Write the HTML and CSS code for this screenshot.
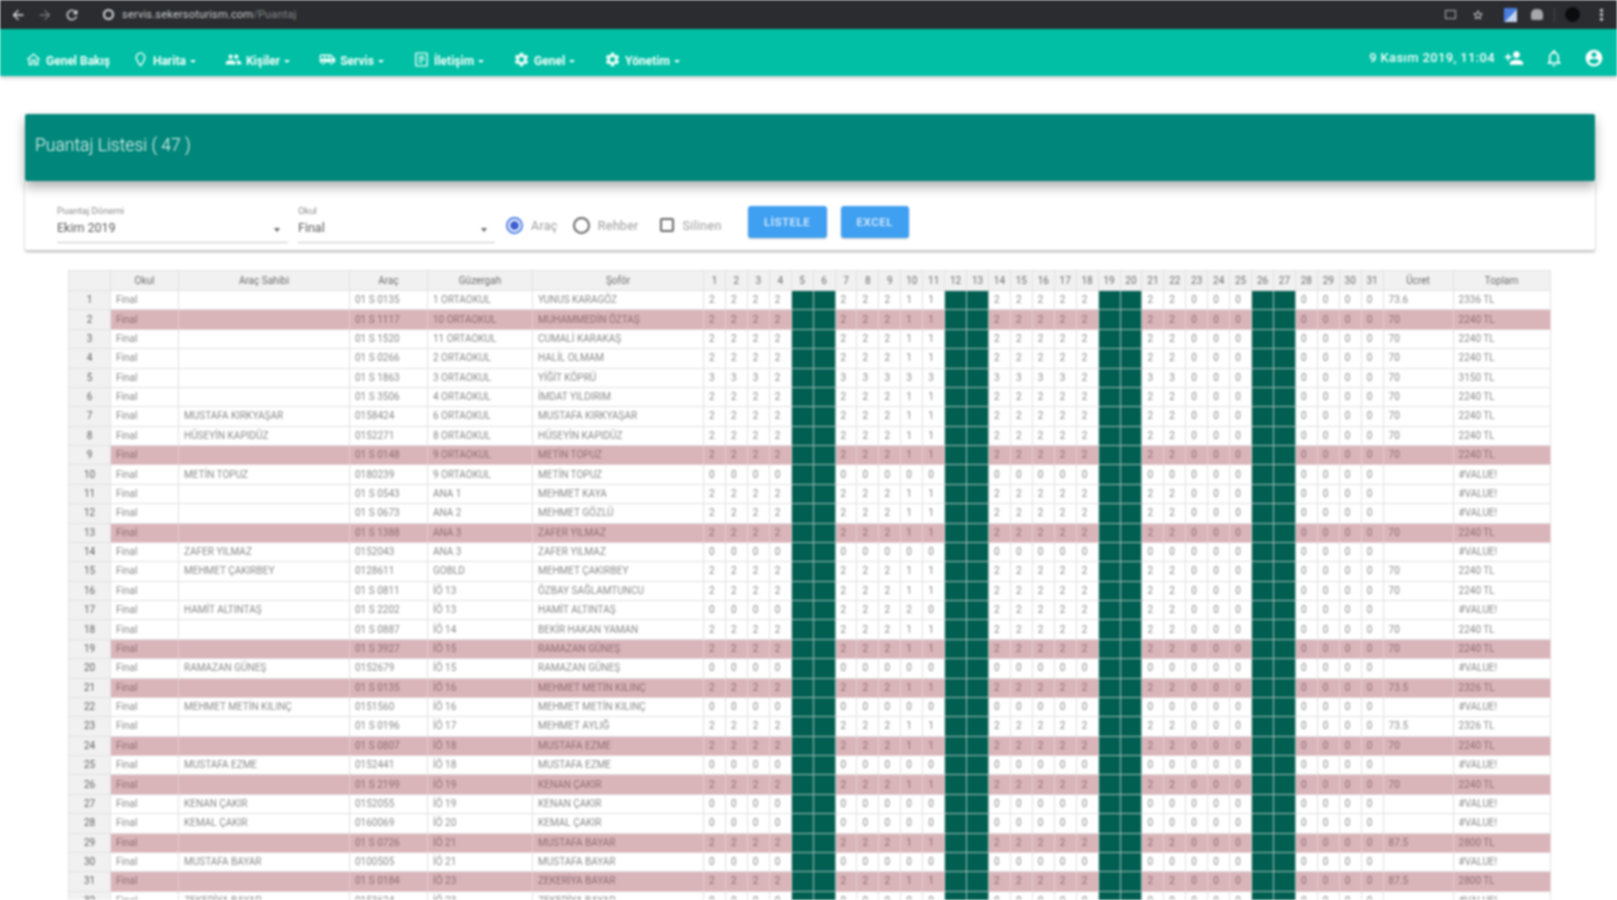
FILE: index.html
```html
<!DOCTYPE html>
<html lang="tr">
<head>
<meta charset="utf-8">
<title>Puantaj</title>
<link rel="stylesheet" href="styles.css">
</head>
<body>
<svg class="defs" width="0" height="0" aria-hidden="true">
  <symbol id="i-back" viewBox="0 0 24 24"><path d="M20 11H7.83l5.59-5.59L12 4l-8 8 8 8 1.41-1.41L7.83 13H20v-2z"/></symbol>
  <symbol id="i-forward" viewBox="0 0 24 24"><path d="M12 4l-1.41 1.41L16.17 11H4v2h12.17l-5.58 5.59L12 20l8-8z"/></symbol>
  <symbol id="i-reload" viewBox="0 0 24 24"><path d="M17.65 6.35C16.2 4.9 14.21 4 12 4c-4.42 0-7.99 3.58-7.99 8s3.57 8 7.99 8c3.73 0 6.84-2.55 7.73-6h-2.08c-.82 2.33-3.04 4-5.65 4-3.31 0-6-2.69-6-6s2.69-6 6-6c1.66 0 3.14.69 4.22 1.78L13 11h7V4l-2.35 2.35z"/></symbol>
  <symbol id="i-star" viewBox="0 0 24 24"><path d="M22 9.24l-7.19-.62L12 2 9.19 8.63 2 9.24l5.46 4.73L5.82 21 12 17.27 18.18 21l-1.63-7.03L22 9.24zM12 15.4l-3.76 2.27 1-4.28-3.32-2.88 4.38-.38L12 6.1l1.71 4.04 4.38.38-3.32 2.88 1 4.28L12 15.4z"/></symbol>
  <symbol id="i-home" viewBox="0 0 24 24"><path d="M12 5.69l5 4.5V18h-2v-6H9v6H7v-7.81l5-4.5M12 3L2 12h3v8h6v-6h2v6h6v-8h3L12 3z"/></symbol>
  <symbol id="i-pin" viewBox="0 0 24 24"><path d="M12 2C8.13 2 5 5.13 5 9c0 5.25 7 13 7 13s7-7.75 7-13c0-3.87-3.13-7-7-7zM7 9c0-2.76 2.24-5 5-5s5 2.24 5 5c0 2.88-2.88 7.19-5 9.88C9.92 16.21 7 11.85 7 9z"/></symbol>
  <symbol id="i-people" viewBox="0 0 24 24"><path d="M16 11c1.66 0 2.99-1.34 2.99-3S17.66 5 16 5c-1.66 0-3 1.34-3 3s1.34 3 3 3zm-8 0c1.66 0 2.99-1.34 2.99-3S9.66 5 8 5C6.34 5 5 6.34 5 8s1.34 3 3 3zm0 2c-2.33 0-7 1.17-7 3.5V19h14v-2.5c0-2.33-4.67-3.5-7-3.5zm8 0c-.29 0-.62.02-.97.05 1.16.84 1.97 1.97 1.97 3.45V19h6v-2.5c0-2.33-4.67-3.5-7-3.5z"/></symbol>
  <symbol id="i-bus" viewBox="0 0 24 24"><path d="M17 5H3c-1.1 0-2 .89-2 2v9h2c0 1.65 1.34 3 3 3s3-1.35 3-3h5.5c0 1.65 1.34 3 3 3s3-1.35 3-3H23v-5l-6-6zM3 11V7h4v4H3zm3 6.5c-.83 0-1.5-.67-1.5-1.5s.67-1.5 1.5-1.5 1.5.67 1.5 1.5-.67 1.5-1.5 1.5zM13 11H9V7h4v4zm4.5 6.5c-.83 0-1.5-.67-1.5-1.5s.67-1.5 1.5-1.5 1.5.67 1.5 1.5-.67 1.5-1.5 1.5zM15 11V7h1l4 4h-5z"/></symbol>
  <symbol id="i-contact" viewBox="0 0 24 24"><path d="M19 2H5c-1.1 0-2 .9-2 2v16c0 1.1.9 2 2 2h14c1.1 0 2-.9 2-2V4c0-1.1-.9-2-2-2zm0 18H5V4h14v16zM8 7h8v2H8V7zm0 4h8v2H8v-2zm0 4h5v2H8v-2z"/></symbol>
  <symbol id="i-gear" viewBox="0 0 24 24"><path d="M19.14 12.94c.04-.3.06-.61.06-.94 0-.32-.02-.64-.07-.94l2.03-1.58c.18-.14.23-.41.12-.61l-1.92-3.32c-.12-.22-.37-.29-.59-.22l-2.39.96c-.5-.38-1.03-.7-1.62-.94l-.36-2.54c-.04-.24-.24-.41-.48-.41h-3.84c-.24 0-.43.17-.47.41l-.36 2.54c-.59.24-1.13.57-1.62.94l-2.39-.96c-.22-.08-.47 0-.59.22L2.74 8.87c-.12.21-.08.47.12.61l2.03 1.58c-.05.3-.09.63-.09.94s.02.64.07.94l-2.03 1.58c-.18.14-.23.41-.12.61l1.92 3.32c.12.22.37.29.59.22l2.39-.96c.5.38 1.03.7 1.62.94l.36 2.54c.05.24.24.41.48.41h3.84c.24 0 .44-.17.47-.41l.36-2.54c.59-.24 1.13-.56 1.62-.94l2.39.96c.22.08.47 0 .59-.22l1.92-3.32c.12-.22.07-.47-.12-.61l-2.01-1.58zM12 15.6c-1.98 0-3.6-1.62-3.6-3.6s1.62-3.6 3.6-3.6 3.6 1.62 3.6 3.6-1.62 3.6-3.6 3.6z"/></symbol>
  <symbol id="i-add" viewBox="0 0 24 24"><path d="M15 12c2.21 0 4-1.79 4-4s-1.79-4-4-4-4 1.79-4 4 1.79 4 4 4zm-9-2V7H4v3H1v2h3v3h2v-3h3v-2H6zm9 4c-2.67 0-8 1.34-8 4v2h16v-2c0-2.66-5.33-4-8-4z"/></symbol>
  <symbol id="i-bell" viewBox="0 0 24 24"><path d="M12 22c1.1 0 2-.9 2-2h-4c0 1.1.89 2 2 2zm6-6v-5c0-3.07-1.64-5.64-4.5-6.32V4c0-.83-.67-1.5-1.5-1.5s-1.5.67-1.5 1.5v.68C7.63 5.36 6 7.92 6 11v5l-2 2v1h16v-1l-2-2zm-2 1H8v-6c0-2.48 1.51-4.5 4-4.5s4 2.02 4 4.5v6z"/></symbol>
  <symbol id="i-account" viewBox="0 0 24 24"><path d="M12 2C6.48 2 2 6.48 2 12s4.48 10 10 10 10-4.48 10-10S17.52 2 12 2zm0 3c1.66 0 3 1.34 3 3s-1.34 3-3 3-3-1.34-3-3 1.34-3 3-3zm0 14.2c-2.5 0-4.71-1.28-6-3.22.03-1.99 4-3.08 6-3.08 1.99 0 5.97 1.09 6 3.08-1.29 1.94-3.5 3.22-6 3.22z"/></symbol>
</svg>

<div class="shot">
  <header class="browser">
    <svg class="bi"><use href="#i-back"/></svg>
    <svg class="bi dim"><use href="#i-forward"/></svg>
    <svg class="bi"><use href="#i-reload"/></svg>
    <span class="site-dot"></span>
    <span class="url">servis.sekersoturism.com<span class="url-path">/Puantaj</span></span>
    <span class="browser-right">
      <span class="cast"></span>
      <svg class="bi small"><use href="#i-star"/></svg>
      <span class="ext-blue"></span>
      <span class="ext-gray"></span>
      <span class="sep"></span>
      <span class="avatar"></span>
      <span class="dots"></span>
    </span>
  </header>

  <nav class="nav">
    <a class="nav-item first"><svg class="ni"><use href="#i-home"/></svg>Genel Bakış</a>
    <a class="nav-item"><svg class="ni"><use href="#i-pin"/></svg>Harita<i class="caret"></i></a>
    <a class="nav-item"><svg class="ni"><use href="#i-people"/></svg>Kişiler<i class="caret"></i></a>
    <a class="nav-item"><svg class="ni"><use href="#i-bus"/></svg>Servis<i class="caret"></i></a>
    <a class="nav-item"><svg class="ni"><use href="#i-contact"/></svg>İletişim<i class="caret"></i></a>
    <a class="nav-item"><svg class="ni"><use href="#i-gear"/></svg>Genel<i class="caret"></i></a>
    <a class="nav-item"><svg class="ni"><use href="#i-gear"/></svg>Yönetim<i class="caret"></i></a>
    <div class="nav-right">
      <span class="date">9 Kasım 2019, 11:04</span>
      <svg class="nr"><use href="#i-add"/></svg>
      <svg class="nr"><use href="#i-bell"/></svg>
      <svg class="nr"><use href="#i-account"/></svg>
    </div>
  </nav>

  <main class="main">
    <section class="title-card"><h1 class="title">Puantaj Listesi ( 47 )</h1></section>
    <section class="filter-card">
      <div class="field period">
        <label class="field-label">Puantaj Dönemi</label>
        <div class="field-value">Ekim 2019<i class="arrow"></i></div>
      </div>
      <div class="field school">
        <label class="field-label">Okul</label>
        <div class="field-value">Final<i class="arrow"></i></div>
      </div>
      <span class="choice first"><i class="radio on"></i>Araç</span>
      <span class="choice"><i class="radio"></i>Rehber</span>
      <span class="choice"><i class="check"></i>Silinen</span>
      <button class="btn list">LİSTELE</button>
      <button class="btn excel">EXCEL</button>
    </section>

    <table class="sheet">
      <colgroup id="cols"></colgroup>
      <thead id="head"></thead>
      <tbody id="body"></tbody>
    </table>
  </main>
</div>
<script src="script.js"></script>
</body>
</html>
```
FILE: styles.css
```css
* { box-sizing: border-box; }
html, body { margin: 0; height: 900px; overflow: hidden; background: #fff; }
body { font-family: Roboto, "Liberation Sans", sans-serif; }
.defs { position: absolute; }

.shot { position: relative; height: 900px; overflow: hidden; filter: blur(1px); }

.browser { height: 29px; background: #2a2c2f; display: flex; align-items: center; padding-left: 10px; color: #d8dadc; }
.bi { width: 16px; height: 16px; fill: #e4e6e8; margin-right: 11px; flex: none; }
.bi.dim { fill: #777a7d; }
.bi.small { width: 12px; height: 12px; margin: 0; }
.site-dot { width: 11px; height: 11px; border-radius: 50%; border: 2px solid #d5d7d9; margin-left: 12px; margin-right: 8px; flex: none; }
.url { font-size: 11px; color: #c6c8ca; letter-spacing: 0.2px; }
.url-path { color: #85888b; }
.browser-right { margin-left: auto; display: flex; align-items: center; gap: 16px; padding-right: 14px; }
.cast { width: 11px; height: 9px; border: 1.5px solid #aaadb0; }
.ext-blue { width: 13px; height: 14px; background: linear-gradient(135deg, #4a7fe0 55%, #c5d4ee 55%); margin-left: 4px; }
.ext-gray { width: 12px; height: 11px; background: #a5a7a9; border-radius: 5px 5px 2px 2px; margin-left: -2px; }
.sep { width: 1px; height: 14px; background: #46484b; margin: 0 -6px 0 -5px; }
.avatar { width: 15px; height: 15px; border-radius: 50%; background: #0c0c0e; margin-right: 7px; }
.dots { width: 3px; height: 13px; margin-left: -3px; background: radial-gradient(circle, #ccc 1.4px, transparent 1.5px) 0 0 / 3px 4.5px; }

.nav { height: 47px; background: #00bfa5; display: flex; align-items: center; padding: 0 13px 0 25px; color: #f4fffc; box-shadow: 0 2px 4px rgba(0,0,0,.22); position: relative; z-index: 2; }
.nav-item { display: flex; align-items: center; font-size: 12px; font-weight: 700; margin-right: 29px; padding-top: 17px; white-space: nowrap; }
.nav-item.first { margin-right: 22px; }
.ni { width: 17px; height: 17px; fill: #eafff9; margin-right: 4px; margin-top: -3px; flex: none; }
.caret { display: inline-block; border: 3px solid transparent; border-top: 3px solid #f4fffc; border-bottom: 0; margin-left: 4px; }
.nav-right { margin-left: auto; display: flex; align-items: center; font-size: 13px; font-weight: 500; margin-top: 10px; }
.date { margin-right: 9px; letter-spacing: .35px; }
.nr { width: 20px; height: 20px; fill: #fff; margin-left: 20px; flex: none; }
.nr:nth-of-type(1) { margin-left: 0; }

.main { padding: 38px 22px 0 25px; }
.title-card { height: 67px; background: #00867a; border-radius: 2px; display: flex; align-items: center; padding: 0 0 6px 10px; box-shadow: 0 6px 12px rgba(0,0,0,.32); position: relative; z-index: 1; }
.title { margin: 0; font-size: 17.5px; font-weight: 300; color: #eef8f6; }
.filter-card { height: 69px; background: #fff; display: flex; align-items: flex-start; padding: 25px 0 0 32px; box-shadow: 0 2px 3px rgba(0,0,0,.28); border-radius: 0 0 2px 2px; }
.field { border-bottom: 1px solid #c4c4c4; height: 37px; flex: none; }
.field.period { width: 231px; margin-right: 10px; }
.field.school { width: 197px; margin-right: 11px; }
.field-label { display: block; font-size: 9.5px; color: #8b8b8b; line-height: 10px; }
.field-value { position: relative; font-size: 12.5px; color: #5a5a5a; line-height: 16px; margin-top: 4px; }
.arrow { position: absolute; right: 8px; top: 8px; border: 3px solid transparent; border-top: 4px solid #666; border-bottom: 0; }
.choice { display: flex; align-items: center; font-size: 12.5px; letter-spacing: .3px; color: #9a9a9a; height: 20px; margin: 9px 21px 0 0; }
.choice.first { margin-right: 15px; }
.radio { width: 17px; height: 17px; border: 2px solid #666; border-radius: 50%; margin-right: 8px; flex: none; }
.radio.on { border-color: #4d7fe8; background: radial-gradient(circle, #3f5fd0 4px, #fff 4.8px); }
.check { width: 14px; height: 14px; border: 2px solid #666; border-radius: 2px; margin-right: 9px; flex: none; }
.btn { border: 0; border-radius: 3px; background: #3f9ff0; color: #dff0ff; font-family: inherit; font-size: 11.5px; font-weight: 500; height: 32px; letter-spacing: .5px; box-shadow: 0 1px 2px rgba(0,0,0,.2); margin-top: 0; padding: 0; flex: none; }
.btn.list { width: 79px; margin-left: 5px; }
.btn.excel { width: 68px; margin-left: 14px; }

.sheet { table-layout: fixed; border-collapse: collapse; width: 1482px; margin: 20px 0 0 43px; font-size: 10px; color: #8a8a8a; }
.sheet th, .sheet td { border: 1px solid #e2e2e2; padding: 0; height: 19.38px; line-height: 12px; overflow: hidden; white-space: nowrap; font-weight: 400; }
.sheet th { background: #f1f1f1; color: #6c6c6c; text-align: center; height: 20px; }
.sheet td { padding-left: 5px; }
.sheet td.num { background: #f1f1f1; color: #5f5f5f; text-align: center; padding: 0; }
.sheet tr.pink td { background: #d9b4b9; border-color: #e4cfd2; color: #8f6f73; }
.sheet tr.pink td.num { background: #f1f1f1; border-color: #e2e2e2; color: #5f5f5f; }
.sheet tr td.off, .sheet tr.pink td.off { background: #005f51; border-color: #a3bdb8; }
```
FILE: script.js
```js
var days = 31;
var off = [5, 6, 12, 13, 19, 20, 26, 27];
var widths = [42, 68, 171, 78, 105, 171];
var headers = ["", "Okul", "Araç Sahibi", "Araç", "Güzergah", "Şoför"];

var STD = "2222..22211..22222..22000..0000";
var ZERO = "0000..00000..00000..00000..0000";
var V = "#VALUE!";

// [pink, owner, plate, route, driver, pattern, fee, total]
var rows = [
  [0, "", "01 S 0135", "1 ORTAOKUL", "YUNUS KARAGÖZ", STD, "73.6", "2336 TL"],
  [1, "", "01 S 1117", "10 ORTAOKUL", "MUHAMMEDİN ÖZTAŞ", STD, "70", "2240 TL"],
  [0, "", "01 S 1520", "11 ORTAOKUL", "CUMALİ KARAKAŞ", STD, "70", "2240 TL"],
  [0, "", "01 S 0266", "2 ORTAOKUL", "HALİL OLMAM", STD, "70", "2240 TL"],
  [0, "", "01 S 1863", "3 ORTAOKUL", "YİĞİT KÖPRÜ", "3332..33333..33332..33000..0000", "70", "3150 TL"],
  [0, "", "01 S 3506", "4 ORTAOKUL", "İMDAT YILDIRIM", STD, "70", "2240 TL"],
  [0, "MUSTAFA KIRKYAŞAR", "0158424", "6 ORTAOKUL", "MUSTAFA KIRKYAŞAR", STD, "70", "2240 TL"],
  [0, "HÜSEYİN KAPIDÜZ", "0152271", "8 ORTAOKUL", "HÜSEYİN KAPIDÜZ", STD, "70", "2240 TL"],
  [1, "", "01 S 0148", "9 ORTAOKUL", "METİN TOPUZ", STD, "70", "2240 TL"],
  [0, "METİN TOPUZ", "0180239", "9 ORTAOKUL", "METİN TOPUZ", ZERO, "", V],
  [0, "", "01 S 0543", "ANA 1", "MEHMET KAYA", STD, "", V],
  [0, "", "01 S 0673", "ANA 2", "MEHMET GÖZLÜ", STD, "", V],
  [1, "", "01 S 1388", "ANA 3", "ZAFER YILMAZ", STD, "70", "2240 TL"],
  [0, "ZAFER YILMAZ", "0152043", "ANA 3", "ZAFER YILMAZ", ZERO, "", V],
  [0, "MEHMET ÇAKIRBEY", "0128611", "GOBLD", "MEHMET ÇAKIRBEY", STD, "70", "2240 TL"],
  [0, "", "01 S 0811", "İÖ 13", "ÖZBAY SAĞLAMTUNCU", STD, "70", "2240 TL"],
  [0, "HAMİT ALTINTAŞ", "01 S 2202", "İÖ 13", "HAMİT ALTINTAŞ", "0000..22220..22222..22000..0000", "", V],
  [0, "", "01 S 0887", "İÖ 14", "BEKİR HAKAN YAMAN", STD, "70", "2240 TL"],
  [1, "", "01 S 3927", "İÖ 15", "RAMAZAN GÜNEŞ", STD, "70", "2240 TL"],
  [0, "RAMAZAN GÜNEŞ", "0152679", "İÖ 15", "RAMAZAN GÜNEŞ", ZERO, "", V],
  [1, "", "01 S 0135", "İÖ 16", "MEHMET METİN KILINÇ", STD, "73.5", "2326 TL"],
  [0, "MEHMET METİN KILINÇ", "0151560", "İÖ 16", "MEHMET METİN KILINÇ", ZERO, "", V],
  [0, "", "01 S 0196", "İÖ 17", "MEHMET AYLIĞ", STD, "73.5", "2326 TL"],
  [1, "", "01 S 0807", "İÖ 18", "MUSTAFA EZME", STD, "70", "2240 TL"],
  [0, "MUSTAFA EZME", "0152441", "İÖ 18", "MUSTAFA EZME", ZERO, "", V],
  [1, "", "01 S 2199", "İÖ 19", "KENAN ÇAKIR", STD, "70", "2240 TL"],
  [0, "KENAN ÇAKIR", "0152055", "İÖ 19", "KENAN ÇAKIR", ZERO, "", V],
  [0, "KEMAL ÇAKIR", "0160069", "İÖ 20", "KEMAL ÇAKIR", ZERO, "", V],
  [1, "", "01 S 0726", "İÖ 21", "MUSTAFA BAYAR", STD, "87.5", "2800 TL"],
  [0, "MUSTAFA BAYAR", "0100505", "İÖ 21", "MUSTAFA BAYAR", ZERO, "", V],
  [1, "", "01 S 0184", "İÖ 23", "ZEKERİYA BAYAR", STD, "87.5", "2800 TL"],
  [0, "ZEKERİYA BAYAR", "0153624", "İÖ 23", "ZEKERİYA BAYAR", ZERO, "", V]
];

function esc(s) { return s.replace(/&/g, "&amp;").replace(/</g, "&lt;"); }

var cols = "";
widths.forEach(function (w) { cols += '<col style="width:' + w + 'px">'; });
for (var d = 1; d <= days; d++) cols += '<col style="width:21.935px">';
cols += '<col style="width:70px"><col style="width:97px">';
document.getElementById("cols").innerHTML = cols;

var head = "<tr>";
headers.forEach(function (h) { head += "<th>" + esc(h) + "</th>"; });
for (d = 1; d <= days; d++) head += "<th>" + d + "</th>";
head += "<th>Ücret</th><th>Toplam</th></tr>";
document.getElementById("head").innerHTML = head;

var body = "";
rows.forEach(function (r, i) {
  body += '<tr class="' + (r[0] ? "pink" : "") + '"><td class="num">' + (i + 1) + "</td><td>Final</td>";
  body += "<td>" + esc(r[1]) + "</td><td>" + esc(r[2]) + "</td><td>" + esc(r[3]) + "</td><td>" + esc(r[4]) + "</td>";
  for (var k = 1; k <= days; k++) {
    if (off.indexOf(k) >= 0) { body += '<td class="off"></td>'; }
    else { body += "<td>" + r[5].charAt(k - 1) + "</td>"; }
  }
  body += "<td>" + r[6] + "</td><td>" + esc(r[7]) + "</td></tr>";
});
document.getElementById("body").innerHTML = body;
```
